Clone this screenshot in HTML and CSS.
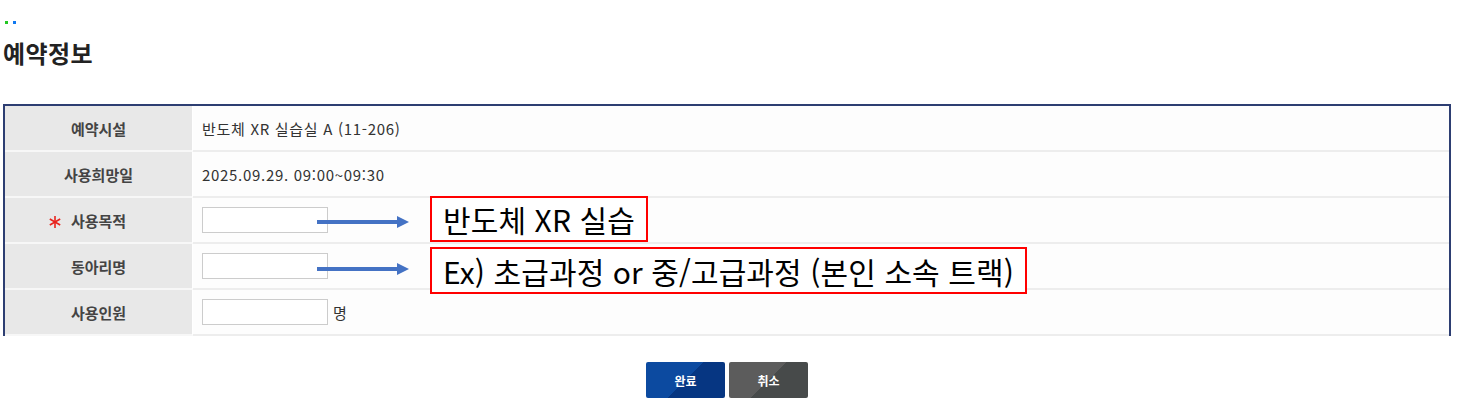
FILE: index.html
```html
<!DOCTYPE html>
<html lang="ko">
<head>
  <meta charset="UTF-8">
  <meta name="viewport" content="width=device-width, initial-scale=1.0">
  <title>예약정보</title>
  <link rel="stylesheet" href="styles.css">
</head>
<body>
  <div class="page">
    <div class="dots">
      <span class="dot green"></span>
      <span class="dot blue"></span>
    </div>
    <h2 class="title">예약정보</h2>

    <div class="form-wrap">
      <table class="info-table">
        <tr>
          <th>예약시설</th>
          <td>반도체 XR 실습실 A (11-206)</td>
        </tr>
        <tr>
          <th>사용희망일</th>
          <td>2025.09.29. 09:00~09:30</td>
        </tr>
        <tr>
          <th>
            <svg class="req" width="12" height="12" viewBox="0 0 12 12"><g stroke="#e8231d" stroke-width="1.6"><line x1="6" y1="0" x2="6" y2="12"/><line x1="0.8" y1="3" x2="11.2" y2="9"/><line x1="0.8" y1="9" x2="11.2" y2="3"/></g></svg>사용목적
          </th>
          <td><input type="text" class="field"></td>
        </tr>
        <tr>
          <th>동아리명</th>
          <td><input type="text" class="field"></td>
        </tr>
        <tr>
          <th>사용인원</th>
          <td><input type="text" class="field"> <span class="unit">명</span></td>
        </tr>
      </table>

      <!-- annotations -->
      <svg class="arrow arrow-1" width="92" height="12" viewBox="0 0 92 12"><rect x="0" y="4" width="82" height="4" fill="#4472c4"/><polygon points="80,0 92,6 80,12" fill="#4472c4"/></svg>
      <svg class="arrow arrow-2" width="92" height="12" viewBox="0 0 92 12"><rect x="0" y="4" width="82" height="4" fill="#4472c4"/><polygon points="80,0 92,6 80,12" fill="#4472c4"/></svg>
      <div class="note-box note-1">반도체 XR 실습</div>
      <div class="note-box note-2">Ex) 초급과정 or 중/고급과정 (본인 소속 트랙)</div>
    </div>

    <div class="btns">
      <button type="button" class="btn btn-ok">완료</button>
      <button type="button" class="btn btn-cancel">취소</button>
    </div>
  </div>
</body>
</html>
```

FILE: styles.css
```css
body {
  margin: 0;
  font-family: "Noto Sans CJK KR", "Noto Sans", sans-serif;
  color: #333;
  background: #fff;
}
.page {
  padding: 21px 0 0 3px;
  width: 1448px;
}
.dots {
  display: flex;
  gap: 5px;
  height: 3px;
  padding-left: 2px;
}
.dot {
  width: 3px;
  height: 3px;
}
.dot.green { background: #22c722; }
.dot.blue { background: #0f78f0; }
.title {
  margin: 13px 0 0;
  font-size: 24px;
  line-height: 32px;
  font-weight: 700;
  color: #222;
  letter-spacing: 0.4px;
}
.form-wrap {
  position: relative;
  margin-top: 35px;
}
.info-table {
  width: 100%;
  border-collapse: separate;
  border-spacing: 0;
  border-top: 2px solid #2d3e72;
  border-left: 2px solid #2d3e72;
  border-right: 2px solid #2d3e72;
}
.info-table th {
  width: 187px;
  height: 44px;
  padding: 0;
  background: #e8e8e8;
  border-bottom: 2px solid #f7f7f7;
  border-right: 1px solid #fff;
  font-size: 15px;
  font-weight: 700;
  color: #444;
  text-align: center;
}
.info-table td {
  height: 44px;
  padding: 0 0 0 9px;
  border-bottom: 2px solid #ededed;
  font-size: 15px;
  letter-spacing: 0.7px;
  color: #333;
  background: #fdfdfd;
}
.req {
  margin-left: -22px;
  margin-right: 10px;
  vertical-align: -1px;
}
.field {
  width: 126px;
  height: 26px;
  box-sizing: border-box;
  border: 1px solid #ccc;
  background: #fff;
  vertical-align: middle;
  margin: 0;
}
.unit {
  vertical-align: middle;
  letter-spacing: 0;
}
.arrow {
  position: absolute;
  left: 314px;
  display: block;
}
.arrow-1 { top: 112px; }
.arrow-2 { top: 159px; }
.note-box {
  position: absolute;
  left: 427px;
  height: 46px;
  box-sizing: border-box;
  border: 2px solid #ff0000;
  padding: 0 11px;
  display: flex;
  align-items: center;
  font-size: 30px;
  line-height: 1;
  letter-spacing: 0.1px;
  color: #000;
  background: #fff;
  white-space: nowrap;
}
.note-1 { top: 92px; }
.note-2 { top: 143px; height: 47px; }
.btns {
  display: flex;
  justify-content: center;
  gap: 4px;
  margin-top: 26px;
}
.btn {
  width: 79px;
  height: 36px;
  border: none;
  border-radius: 2px;
  color: #fff;
  font-family: "Noto Sans CJK KR", sans-serif;
  font-size: 12px;
  font-weight: 700;
  cursor: pointer;
}
.btn-ok {
  background: linear-gradient(135deg, #0c4aa0 50%, #063682 50%);
}
.btn-cancel {
  background: linear-gradient(135deg, #5c5c5c 50%, #474a4a 50%);
}
```
